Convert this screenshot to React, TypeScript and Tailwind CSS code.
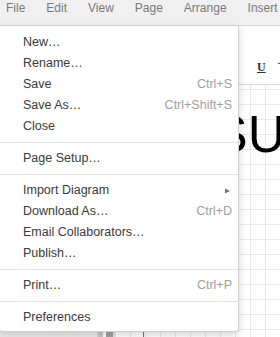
import React from 'react';

type Entry = { label: string; shortcut?: string; submenu?: boolean } | 'sep';

const entries: Entry[] = [
  { label: 'New…' },
  { label: 'Rename…' },
  { label: 'Save', shortcut: 'Ctrl+S' },
  { label: 'Save As…', shortcut: 'Ctrl+Shift+S' },
  { label: 'Close' },
  'sep',
  { label: 'Page Setup…' },
  'sep',
  { label: 'Import Diagram', submenu: true },
  { label: 'Download As…', shortcut: 'Ctrl+D' },
  { label: 'Email Collaborators…' },
  { label: 'Publish…' },
  'sep',
  { label: 'Print…', shortcut: 'Ctrl+P' },
  'sep',
  { label: 'Preferences' },
];

const menus = ['File', 'Edit', 'View', 'Page', 'Arrange', 'Insert'];

function FileMenu() {
  return (
    <div className="absolute left-[-1px] top-[26px] z-10 w-[240px] rounded-b-[3px] border-x border-b border-[#d0d0d0] bg-white pt-[6px] pb-[3px] shadow-[0_3px_8px_rgba(0,0,0,0.16)]">
      {entries.map((e, i) =>
        e === 'sep' ? (
          <div key={i} className="my-[5px] h-px bg-[#e3e3e3]" />
        ) : (
          <div
            key={i}
            className="flex h-[21px] items-center justify-between pl-[23px] pr-[6px] text-[12.5px] leading-[21px] text-[#3a3a3a]"
          >
            <span>{e.label}</span>
            {e.shortcut && <span className="text-[#a0a0a0]">{e.shortcut}</span>}
            {e.submenu && (
              <svg width="6" height="6" viewBox="0 0 6 6" className="mr-[1px]">
                <polygon points="0,0.5 5,3 0,5.5" fill="#777" />
              </svg>
            )}
          </div>
        )
      )}
    </div>
  );
}

export default function App() {
  return (
    <div className="relative h-[337px] w-[280px] overflow-hidden bg-white font-['Liberation_Sans',Arial,sans-serif]">
      <div className="flex h-[26px] gap-[21px] border-b border-[#d4d4d4] bg-[#f0f0f0] pl-[6px] text-[12px] leading-[17px] text-[#7a7a7a]">
        {menus.map((m) => (
          <span key={m} className="whitespace-nowrap">
            {m}
          </span>
        ))}
      </div>

      <div className="relative h-[59px] border-b border-[#d8d8d8] bg-white">
        <span className="absolute left-[257px] top-[34px] font-['Liberation_Serif',serif] text-[12px] font-bold leading-[14px] text-[#333] underline">
          U
        </span>
        <span className="absolute left-[278px] top-[37px] h-px w-[3px] bg-[#555]" />
      </div>

      <div className="flex h-[252px]">
        <div className="w-[97px] bg-[#ececec]" />
        <div className="w-px bg-[#d6d6d6]" />
        <div className="w-[5px] bg-[#c8c8c8]" />
        <div className="w-[3px] bg-white" />
        <div className="w-[7px] bg-[#a3a3a3]" />
        <div className="w-[2px] bg-[#e6e6e6]" />
        <div className="relative flex-1 overflow-hidden bg-white bg-[linear-gradient(to_right,#e9e9e9_1px,transparent_1px),linear-gradient(to_bottom,#e9e9e9_1px,transparent_1px)] bg-[size:15px_15px] bg-[position:0_4px]">
          <div className="absolute bottom-0 left-[28px] top-0 w-px bg-[#3b82d6]" />
          <span className="absolute left-[98px] top-[23px] whitespace-nowrap text-[52px] leading-[52px] text-black">
            SU
          </span>
        </div>
      </div>

      <FileMenu />
    </div>
  );
}
